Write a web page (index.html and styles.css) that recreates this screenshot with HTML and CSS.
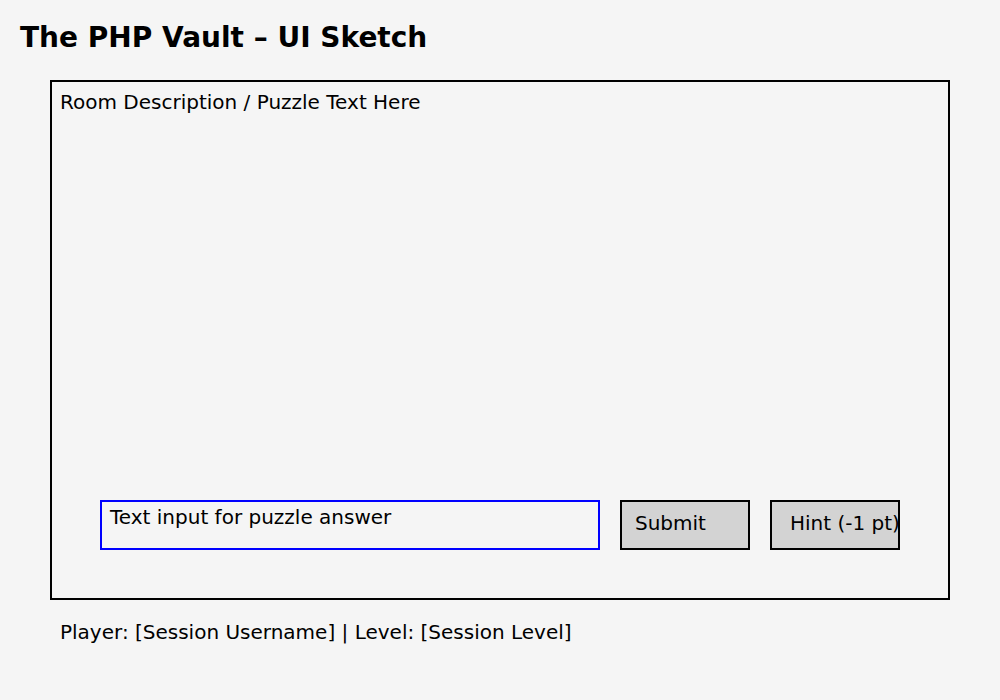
FILE: index.html
```html
<!DOCTYPE html>
<html>
<head>
<meta charset="utf-8">
<title>The PHP Vault – UI Sketch</title>
<link rel="stylesheet" href="styles.css">
</head>
<body>
<h1 class="title">The PHP Vault – UI Sketch</h1>
<main class="panel">
  <p class="room-text">Room Description / Puzzle Text Here</p>
  <div class="controls">
    <div class="answer-input">Text input for puzzle answer</div>
    <div class="btn btn-submit">Submit</div>
    <div class="btn btn-hint">Hint (-1 pt)</div>
  </div>
</main>
<p class="status">Player: [Session Username] | Level: [Session Level]</p>
</body>
</html>
```

FILE: styles.css
```css
html, body {
  margin: 0;
  padding: 0;
  background: #f5f5f5;
  color: #000;
  font-family: "DejaVu Sans", sans-serif;
}
body {
  width: 1000px;
  height: 700px;
  overflow: hidden;
}
.title {
  margin: 0;
  padding: 22px 0 0 20px;
  height: 60px;
  box-sizing: border-box;
  font-size: 28px;
  font-weight: bold;
  line-height: 32px;
}
.panel {
  margin: 20px 0 0 50px;
  width: 900px;
  height: 520px;
  box-sizing: border-box;
  border: 2px solid #000;
  display: flex;
  flex-direction: column;
  justify-content: space-between;
}
.room-text {
  margin: 0;
  padding: 8px 0 0 8px;
  font-size: 20px;
  line-height: 24px;
}
.controls {
  display: flex;
  gap: 20px;
  margin: 0 0 48px 48px;
}
.answer-input {
  width: 500px;
  height: 50px;
  box-sizing: border-box;
  border: 2px solid #0000ff;
  padding: 3px 0 0 8px;
  font-size: 20px;
  line-height: 24px;
}
.btn {
  width: 130px;
  height: 50px;
  box-sizing: border-box;
  border: 2px solid #000;
  background: #d3d3d3;
  font-size: 20px;
  line-height: 24px;
  padding-top: 9px;
  white-space: nowrap;
}
.btn-submit { padding-left: 13px; }
.btn-hint { padding-left: 18px; }
.status {
  margin: 0;
  padding: 20px 0 0 60px;
  font-size: 20px;
  line-height: 24px;
}
```
